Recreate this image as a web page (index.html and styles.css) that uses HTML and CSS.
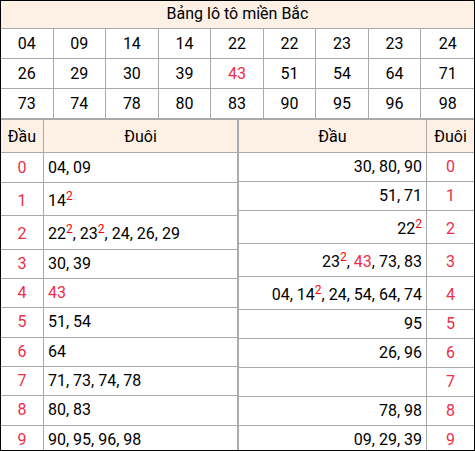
FILE: index.html
```html
<!DOCTYPE html>
<html lang="vi">
<head>
<meta charset="utf-8">
<title>Bảng lô tô miền Bắc</title>
<link rel="stylesheet" href="styles.css">
</head>
<body>
<div class="board">
  <table class="loto">
    <colgroup>
      <col><col><col><col><col><col><col><col><col>
    </colgroup>
    <tr><th colspan="9" class="title">Bảng lô tô miền Bắc</th></tr>
    <tr><td>04</td><td>09</td><td>14</td><td>14</td><td>22</td><td>22</td><td>23</td><td>23</td><td>24</td></tr>
    <tr><td>26</td><td>29</td><td>30</td><td>39</td><td class="red">43</td><td>51</td><td>54</td><td>64</td><td>71</td></tr>
    <tr><td>73</td><td>74</td><td>78</td><td>80</td><td>83</td><td>90</td><td>95</td><td>96</td><td>98</td></tr>
  </table>
  <div class="split">
    <table class="side side-left">
      <colgroup><col class="c-key"><col class="c-list-left"></colgroup>
      <tr class="head"><th>Đầu</th><th>Đuôi</th></tr>
      <tr><td class="key">0</td><td class="list">04, 09</td></tr>
      <tr class="tall"><td class="key">1</td><td class="list">14<sup>2</sup></td></tr>
      <tr class="tall"><td class="key">2</td><td class="list">22<sup>2</sup>, 23<sup>2</sup>, 24, 26, 29</td></tr>
      <tr><td class="key">3</td><td class="list">30, 39</td></tr>
      <tr><td class="key">4</td><td class="list"><span class="red">43</span></td></tr>
      <tr><td class="key">5</td><td class="list">51, 54</td></tr>
      <tr><td class="key">6</td><td class="list">64</td></tr>
      <tr><td class="key">7</td><td class="list">71, 73, 74, 78</td></tr>
      <tr><td class="key">8</td><td class="list">80, 83</td></tr>
      <tr><td class="key">9</td><td class="list">90, 95, 96, 98</td></tr>
    </table>
    <table class="side side-right">
      <colgroup><col class="c-list-right"><col class="c-key-right"></colgroup>
      <tr class="head"><th>Đầu</th><th>Đuôi</th></tr>
      <tr><td class="list">30, 80, 90</td><td class="key">0</td></tr>
      <tr><td class="list">51, 71</td><td class="key">1</td></tr>
      <tr class="tall"><td class="list">22<sup>2</sup></td><td class="key">2</td></tr>
      <tr class="tall"><td class="list">23<sup>2</sup>, <span class="red">43</span>, 73, 83</td><td class="key">3</td></tr>
      <tr class="tall"><td class="list">04, 14<sup>2</sup>, 24, 54, 64, 74</td><td class="key">4</td></tr>
      <tr><td class="list">95</td><td class="key">5</td></tr>
      <tr><td class="list">26, 96</td><td class="key">6</td></tr>
      <tr><td class="list"></td><td class="key">7</td></tr>
      <tr><td class="list">78, 98</td><td class="key">8</td></tr>
      <tr><td class="list">09, 29, 39</td><td class="key">9</td></tr>
    </table>
  </div>
</div>
</body>
</html>
```
FILE: styles.css
```css
html, body {
  margin: 0;
  padding: 0;
  background: #fff;
}

.board {
  width: 475px;
  height: 451px;
  box-sizing: border-box;
  border: 1px solid #000;
  overflow: hidden;
  font-family: Roboto, "Liberation Sans", sans-serif;
  font-size: 16px;
  color: #000;
}

table {
  border-collapse: separate;
  border-spacing: 0;
  table-layout: fixed;
}

th, td {
  box-sizing: border-box;
  padding: 0;
  font-weight: normal;
  line-height: 19px;
  white-space: nowrap;
}

.red {
  color: #ee2e47;
}

sup {
  font-size: 12px;
  line-height: 0;
  vertical-align: 6px;
  color: #ff0000;
}

/* top lotto table */
.loto {
  width: 473px;
}

.loto .title {
  background: #fdf1e6;
  padding: 3px 0 5px;
  text-align: center;
  border-bottom: 1px solid #aaa;
}

.loto td {
  text-align: center;
  padding: 5px 0;
  border-right: 1px solid #aaa;
  border-bottom: 1px solid #aaa;
}

.loto td:last-child {
  border-right: 0;
}

/* bottom split tables */
.split {
  display: flex;
}

.side {
  border-top: 1px solid #aaa;
}

.side-left {
  width: 237px;
}

.side-right {
  width: 236px;
}

.c-key { width: 43px; }
.c-list-left { width: 194px; }
.c-list-right { width: 188px; }
.c-key-right { width: 48px; }

.side .head th {
  background: #fdf1e6;
  text-align: center;
  padding: 7px 0 6px;
  border-bottom: 1px solid #aaa;
}

.side td {
  padding: 4px 0 5px;
  border-bottom: 1px solid #aaa;
}

.side .tall td {
  padding-top: 8px;
}

.side-left th,
.side-left td {
  border-right: 1px solid #aaa;
}

.side-right th,
.side-right td {
  border-left: 1px solid #aaa;
}

.side .key {
  text-align: center;
  color: #ee2e47;
}

.side-left .list {
  text-align: left;
  padding-left: 4px;
}

.side-right .list {
  text-align: right;
  padding-right: 4px;
}
```
